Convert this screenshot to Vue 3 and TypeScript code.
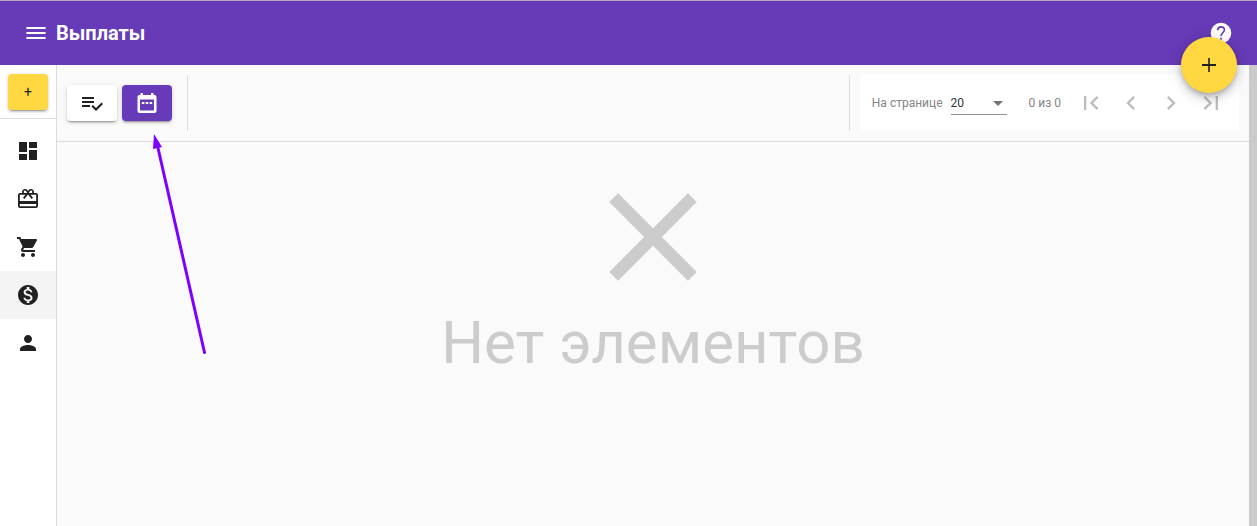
<script setup lang="ts">
import { ref } from 'vue'

interface Item { label: string; path: string }

const nav: Item[] = [
  { label: 'Панель', path: 'M3 13h8V3H3v10zm0 8h8v-6H3v6zm10 0h8V11h-8v10zm0-18v6h8V3h-8z' },
  { label: 'Подарки', path: 'M20 6h-2.18c.11-.31.18-.65.18-1 0-1.66-1.34-3-3-3-1.05 0-1.96.54-2.5 1.35l-.5.67-.5-.68C10.96 2.54 10.05 2 9 2 7.34 2 6 3.34 6 5c0 .35.07.69.18 1H4c-1.11 0-1.99.89-1.99 2L2 19c0 1.11.89 2 2 2h16c1.11 0 2-.89 2-2V8c0-1.11-.89-2-2-2zm-5-2.4c.75 0 1.3.6 1.3 1.3s-.6 1.2-1.3 1.2h-2.2l.9-1.6c.3-.6.7-.9 1.3-.9zM9 3.6c.6 0 1 .3 1.3.9l.9 1.6H9c-.7 0-1.3-.5-1.3-1.2S8.3 3.6 9 3.6zM20.2 19.3H3.8V17h16.4v2.3zm0-5.3H3.8V7.8h5.6L7 10.83l1.5 1.1L11 8.76l1-1.36 1 1.36 2.5 3.17 1.5-1.1-2.4-3.03h5.6V14z' },
  { label: 'Заказы', path: 'M7 18c-1.1 0-1.99.9-1.99 2S5.9 22 7 22s2-.9 2-2-.9-2-2-2zM1 2v2h2l3.6 7.59-1.35 2.45c-.16.28-.25.61-.25.96 0 1.1.9 2 2 2h12v-2H7.42c-.14 0-.25-.11-.25-.25l.03-.12.9-1.63h7.45c.75 0 1.41-.41 1.75-1.03l3.58-6.49c.08-.14.12-.31.12-.48 0-.55-.45-1-1-1H5.21l-.94-2H1zm16 16c-1.1 0-1.99.9-1.99 2s.89 2 1.99 2 2-.9 2-2-.9-2-2-2z' },
  { label: 'Выплаты', path: 'M12 2C6.48 2 2 6.48 2 12s4.48 10 10 10 10-4.48 10-10S17.52 2 12 2zm1.41 16.09V20h-2.67v-1.93c-1.71-.36-3.16-1.46-3.27-3.4h1.96c.1 1.05.82 1.87 2.65 1.87 1.96 0 2.4-.98 2.4-1.59 0-.83-.44-1.61-2.67-2.14-2.48-.6-4.18-1.62-4.18-3.67 0-1.72 1.39-2.84 3.11-3.21V4h2.67v1.95c1.86.45 2.79 1.86 2.85 3.39H14.3c-.05-1.11-.64-1.87-2.22-1.87-1.5 0-2.4.68-2.4 1.64 0 .84.65 1.39 2.67 1.91s4.18 1.39 4.18 3.91c-.01 1.83-1.38 2.83-3.12 3.16z' },
  { label: 'Пользователи', path: 'M12 12c2.21 0 4-1.79 4-4s-1.79-4-4-4-4 1.79-4 4 1.79 4 4 4zm0 2c-2.67 0-8 1.34-8 4v2h16v-2c0-2.66-5.33-4-8-4z' },
]

const pages: Item[] = [
  { label: 'Первая страница', path: 'M18.41 16.59L13.82 12l4.59-4.59L17 6l-6 6 6 6zM6 6h2v12H6z' },
  { label: 'Предыдущая страница', path: 'M15.41 7.41L14 6l-6 6 6 6 1.41-1.41L10.83 12z' },
  { label: 'Следующая страница', path: 'M10 6L8.59 7.41 13.17 12l-4.58 4.59L10 18l6-6z' },
  { label: 'Последняя страница', path: 'M5.59 7.41L10.18 12l-4.59 4.59L7 18l6-6-6-6zM16 6h2v12h-2z' },
]

const current = ref('Выплаты')
const pageSize = ref(20)
</script>

<template>
  <div class="app">
    <header class="header">
      <button class="icon-btn" type="button" aria-label="Меню">
        <svg class="icon" viewBox="0 0 24 24"><path d="M2.4 6h19.2v2H2.4zM2.4 11h19.2v2H2.4zM2.4 16h19.2v2H2.4z" /></svg>
      </button>
      <h1>Выплаты</h1>
      <button class="icon-btn help" type="button" aria-label="Помощь">
        <svg class="icon" viewBox="0 0 24 24">
          <circle cx="12" cy="12" r="10.3" />
          <path class="mark" d="M8.7 9.2C8.8 7 10 5.9 12 5.9s3.4 1.2 3.4 3.1c0 2.6-3.4 3-3.4 6.1M12 16.8v2" />
        </svg>
      </button>
      <button class="fab" type="button" aria-label="Добавить">
        <svg class="icon" viewBox="0 0 24 24"><path d="M19 12.9h-6.2V19h-1.6v-6.1H5v-1.8h6.2V5h1.6v6.1H19z" /></svg>
      </button>
    </header>

    <div class="body">
      <aside class="sidebar">
        <div class="create">
          <button class="raised add" type="button">+</button>
        </div>
        <nav>
          <a
            v-for="item in nav"
            :key="item.label"
            href="#"
            :class="{ active: item.label === current }"
            :aria-label="item.label"
            @click.prevent="current = item.label"
          >
            <svg class="icon" viewBox="0 0 24 24"><path :d="item.path" /></svg>
          </a>
        </nav>
      </aside>

      <main class="main">
        <div class="toolbar">
          <button class="raised tool" type="button" aria-label="Выбрать">
            <svg class="icon" viewBox="0 0 24 24"><path d="M14 10H2v2h12v-2zm0-4H2v2h12V6zM2 16h8v-2H2v2zm19.5-4.5L23 13l-6.99 7-4.51-4.5L13 14l3.01 3 5.49-5.5z" /></svg>
          </button>
          <button class="raised tool primary" type="button" aria-label="Период">
            <svg class="icon" viewBox="0 0 24 24">
              <path fill-rule="evenodd" d="M5.5 2H8v2h8V2h2.500v2H19.500c1.100 0 2 .9 2 2v14c0 1.100-.9 2-2 2h-15c-1.100 0-2-.9-2-2V6c0-1.100.9-2 2-2h1zM5 8.500v11h14v-11z" />
              <path d="M6.800 11h2.600v2H6.800zM10.700 11h2.600v2h-2.600zM14.600 11h2.600v2h-2.600z" />
            </svg>
          </button>
          <span class="rule"></span>
          <span class="rule end"></span>
          <div class="paginator">
            <label for="page-size">На странице</label>
            <div class="select">
              <select id="page-size" v-model="pageSize">
                <option :value="20">20</option>
                <option :value="50">50</option>
              </select>
              <svg class="caret" viewBox="0 0 10 5"><path d="M0 0h10L5 5z" /></svg>
            </div>
            <span class="range">0 из 0</span>
            <button v-for="p in pages" :key="p.label" class="page" type="button" disabled :aria-label="p.label">
              <svg viewBox="0 0 24 24"><path :d="p.path" /></svg>
            </button>
          </div>
        </div>
        <section class="empty">
          <svg viewBox="0 0 24 24"><path d="M19 6.41L17.59 5 12 10.59 6.41 5 5 6.41 10.59 12 5 17.59 6.41 19 12 13.41 17.59 19 19 17.59 13.41 12z" /></svg>
          <p>Нет элементов</p>
        </section>
        <svg class="pointer" viewBox="0 0 60 224" aria-hidden="true">
          <path class="shaft" d="M8 14L54.5 218.5" />
          <path d="M4 0L12 13L3 15z" />
        </svg>
      </main>
      <div class="scrollbar"></div>
    </div>
  </div>
</template>

<style>
body {
  margin: 0;
}
</style>

<style scoped>
.app {
  display: flex;
  flex-direction: column;
  min-height: 100vh;
  background: #fafafa;
  color: #212121;
  font-family: Roboto, "Liberation Sans", sans-serif;
}
button {
  border: 0;
  padding: 0;
  font-family: inherit;
  color: inherit;
  cursor: pointer;
}
svg {
  display: block;
  fill: currentColor;
}
.icon {
  width: 24px;
  height: 24px;
}
.header {
  position: relative;
  z-index: 2;
  display: flex;
  align-items: center;
  gap: 8px;
  height: 64px;
  padding: 0 24px;
  border-top: 1px solid #b0a9bd;
  background: #673ab7;
  color: #fff;
}
.header h1 {
  margin: 0;
  font-size: 20px;
  line-height: 32px;
  font-weight: 700;
}
.icon-btn {
  background: none;
}
.help {
  margin-left: auto;
}
.mark {
  fill: none;
  stroke: #673ab7;
  stroke-width: 1.6;
}
.fab {
  position: absolute;
  right: 20px;
  bottom: -28px;
  display: grid;
  place-items: center;
  width: 56px;
  height: 56px;
  border-radius: 50%;
  background: #ffd740;
  color: #212121;
  box-shadow: 0 3px 5px -1px rgba(0, 0, 0, .2), 0 6px 10px 0 rgba(0, 0, 0, .14), 0 1px 18px 0 rgba(0, 0, 0, .12);
}
.body {
  flex: 1;
  display: flex;
}
.sidebar {
  width: 56px;
  border-right: 1px solid #dcdcdc;
  background: #fff;
}
.create {
  padding: 9px 8px 8px;
  border-bottom: 1px solid #dcdcdc;
}
.raised {
  height: 36px;
  border-radius: 4px;
  box-shadow: 0 3px 1px -2px rgba(0, 0, 0, .2), 0 2px 2px 0 rgba(0, 0, 0, .14), 0 1px 5px 0 rgba(0, 0, 0, .12);
}
.add {
  display: block;
  width: 100%;
  background: #ffd740;
  font-size: 14px;
  font-weight: 400;
}
nav {
  padding: 8px 0;
}
nav a {
  display: grid;
  place-items: center;
  height: 48px;
  color: #212121;
}
nav a.active {
  background: #f4f4f4;
}
.main {
  position: relative;
  flex: 1;
}
.toolbar {
  display: flex;
  align-items: center;
  padding: 10px;
  border-bottom: 1px solid #dcdcdc;
}
.tool {
  display: grid;
  place-items: center;
  width: 50px;
  margin-right: 5px;
  background: #fff;
}
.primary {
  background: #673ab7;
  color: #fff;
}
.rule {
  width: 1px;
  height: 56px;
  margin: 0 10px;
  background: #dcdcdc;
}
.end {
  margin-left: auto;
}
.paginator {
  display: flex;
  align-items: center;
  height: 56px;
  padding: 0 8px 0 12px;
  background: #fff;
  color: #858585;
  font-size: 12px;
}
.select {
  position: relative;
  width: 56px;
  margin: 0 22px 0 8px;
}
select {
  display: block;
  width: 100%;
  height: 24px;
  padding: 0;
  border: 0;
  border-bottom: 1px solid #949494;
  border-radius: 0;
  background: none;
  appearance: none;
  color: #333;
  font-family: inherit;
  font-size: 12px;
}
.caret {
  position: absolute;
  top: 10px;
  right: 4px;
  width: 10px;
  height: 5px;
  color: #757575;
  pointer-events: none;
}
.range {
  margin-right: 10px;
}
.page {
  display: grid;
  place-items: center;
  width: 40px;
  height: 40px;
  background: none;
  color: #bdbdbd;
}
.page svg {
  width: 28px;
  height: 28px;
}
.empty {
  display: flex;
  flex-direction: column;
  align-items: center;
  padding: 20px;
  color: #ccc;
}
.empty svg {
  width: 150px;
  height: 150px;
}
.empty p {
  margin: 0;
  font-size: 60px;
  line-height: 62px;
}
.pointer {
  position: absolute;
  top: 69px;
  left: 93px;
  width: 60px;
  height: 224px;
  fill: #7f00ff;
  pointer-events: none;
}
.shaft {
  stroke: #7f00ff;
  stroke-width: 3;
  stroke-linecap: round;
}
.scrollbar {
  width: 8px;
  background: #cbcbcb;
}
</style>
